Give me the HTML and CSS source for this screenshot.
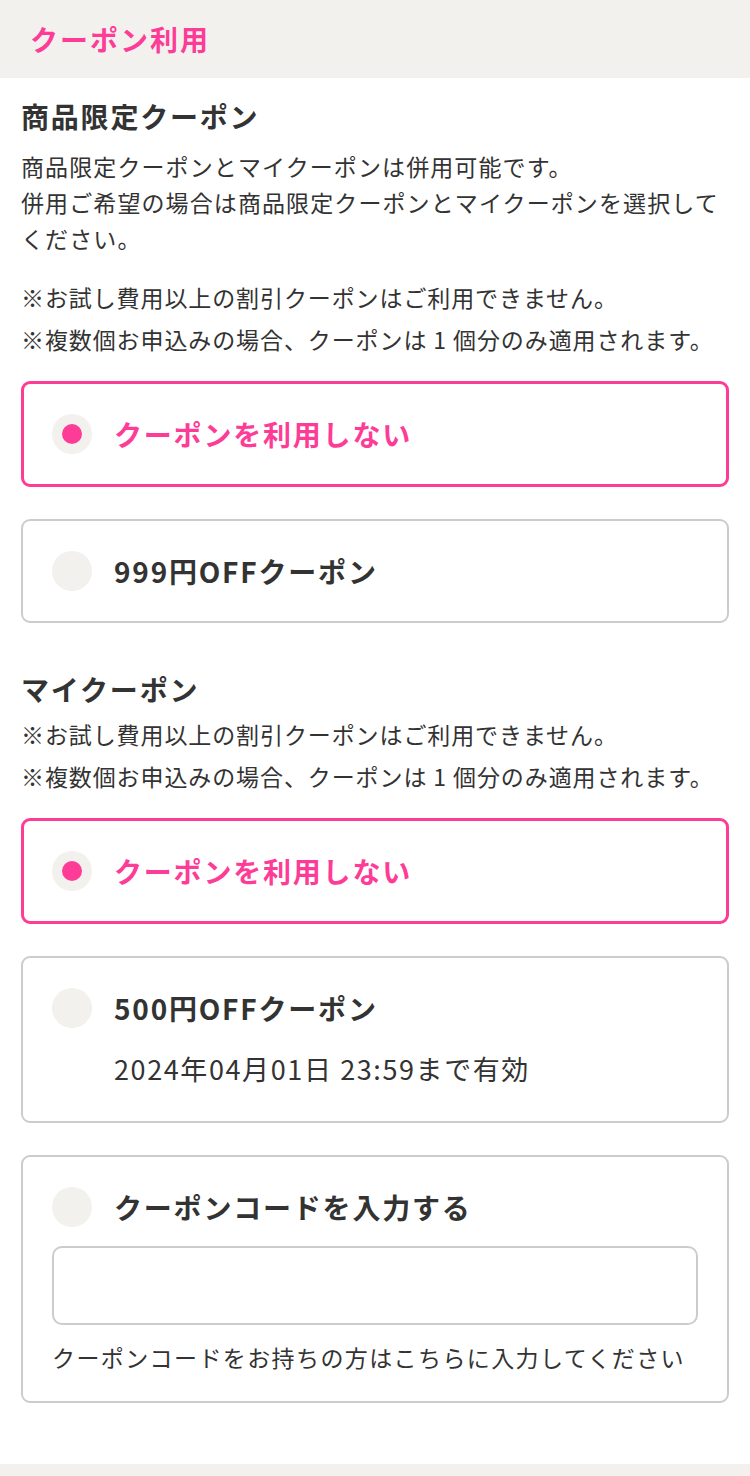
FILE: index.html
```html
<!DOCTYPE html>
<html lang="ja">
<head>
<meta charset="utf-8">
<title>クーポン利用</title>
<link rel="stylesheet" href="styles.css">
</head>
<body>
<header class="page-header">
  <h1 class="page-title">クーポン利用</h1>
</header>
<main class="content">
  <section class="section">
    <h2 class="section-title">商品限定クーポン</h2>
    <p class="lead">商品限定クーポンとマイクーポンは併用可能です。<br>併用ご希望の場合は商品限定クーポンとマイクーポンを選択してください。</p>
    <div class="notes">
      <p class="note">※お試し費用以上の割引クーポンはご利用できません。</p>
      <p class="note">※複数個お申込みの場合、クーポンは 1 個分のみ適用されます。</p>
    </div>
    <div class="options">
      <label class="option is-selected">
        <span class="option-row"><span class="radio"></span><span class="option-label">クーポンを利用しない</span></span>
      </label>
      <label class="option">
        <span class="option-row"><span class="radio"></span><span class="option-label">999円OFFクーポン</span></span>
      </label>
    </div>
  </section>
  <section class="section section-my">
    <h2 class="section-title">マイクーポン</h2>
    <div class="notes notes-tight">
      <p class="note">※お試し費用以上の割引クーポンはご利用できません。</p>
      <p class="note">※複数個お申込みの場合、クーポンは 1 個分のみ適用されます。</p>
    </div>
    <div class="options">
      <label class="option is-selected">
        <span class="option-row"><span class="radio"></span><span class="option-label">クーポンを利用しない</span></span>
      </label>
      <label class="option">
        <span class="option-row"><span class="radio"></span><span class="option-label">500円OFFクーポン</span></span>
        <span class="option-sub">2024年04月01日 23:59まで有効</span>
      </label>
      <div class="option option-code">
        <span class="option-row"><span class="radio"></span><span class="option-label">クーポンコードを入力する</span></span>
        <input class="code-input" type="text" aria-label="クーポンコード">
        <p class="code-help">クーポンコードをお持ちの方はこちらに入力してください</p>
      </div>
    </div>
  </section>
</main>
<footer class="page-footer"></footer>
</body>
</html>
```

FILE: styles.css
```css
* { box-sizing: border-box; }
html, body { margin: 0; padding: 0; }
body {
  background: #fff;
  color: #333;
  font-family: "Noto Sans CJK JP", "Noto Sans", sans-serif;
  width: 750px;
}
p, h1, h2 { margin: 0; }

.page-header {
  background: #f3f1ee;
  height: 78px;
  padding-left: 30px;
  display: flex;
  align-items: center;
}
.page-title {
  color: #fd3c97;
  font-size: 28px;
  font-weight: 700;
  letter-spacing: 2px;
  line-height: 36px;
}

.content {
  padding: 0 21px 61px;
}
.section-title {
  font-size: 28px;
  font-weight: 700;
  letter-spacing: 1.8px;
  line-height: 36px;
  margin-top: 20px;
}
.section-my .section-title { margin-top: 48px; }

.lead {
  margin-top: 14px;
  font-size: 23px;
  line-height: 36px;
  letter-spacing: 1.1px;
}
.notes { margin-top: 20px; }
.notes-tight { margin-top: 6px; }
.note {
  font-size: 23px;
  line-height: 42px;
  letter-spacing: 0.9px;
}

.options {
  margin-top: 21px;
  display: flex;
  flex-direction: column;
  gap: 32px;
}
.option {
  display: block;
  border: 2px solid #ccc;
  border-radius: 9px;
  padding: 30px 29px;
}
.option.is-selected {
  border: 3px solid #fd3c97;
  padding: 30px 28px;
}
.option-row {
  display: flex;
  align-items: center;
  gap: 22px;
  height: 40px;
}
.radio {
  width: 40px;
  height: 40px;
  border-radius: 50%;
  background: #f3f1ee;
  flex: none;
  display: flex;
  align-items: center;
  justify-content: center;
}
.is-selected .radio::after {
  content: "";
  width: 20px;
  height: 20px;
  border-radius: 50%;
  background: #fd3c97;
}
.option-label {
  font-size: 28px;
  font-weight: 700;
  letter-spacing: 1.8px;
  line-height: 36px;
}
.is-selected .option-label { color: #fd3c97; }

.option-sub {
  display: block;
  margin: 23px 0 0 62px;
  font-size: 27px;
  line-height: 36px;
  letter-spacing: 1.6px;
  padding-bottom: 4px;
}

.option-code { padding-bottom: 28px; }
.code-input {
  display: block;
  width: 100%;
  height: 79px;
  margin-top: 19px;
  border: 2px solid #ccc;
  border-radius: 10px;
  background: #fff;
  font-size: 22px;
  padding: 0 16px;
}
.code-help {
  margin-top: 16px;
  font-size: 23px;
  line-height: 32px;
  letter-spacing: 1.4px;
}

.page-footer {
  background: #f3f1ee;
  height: 14px;
}
```
